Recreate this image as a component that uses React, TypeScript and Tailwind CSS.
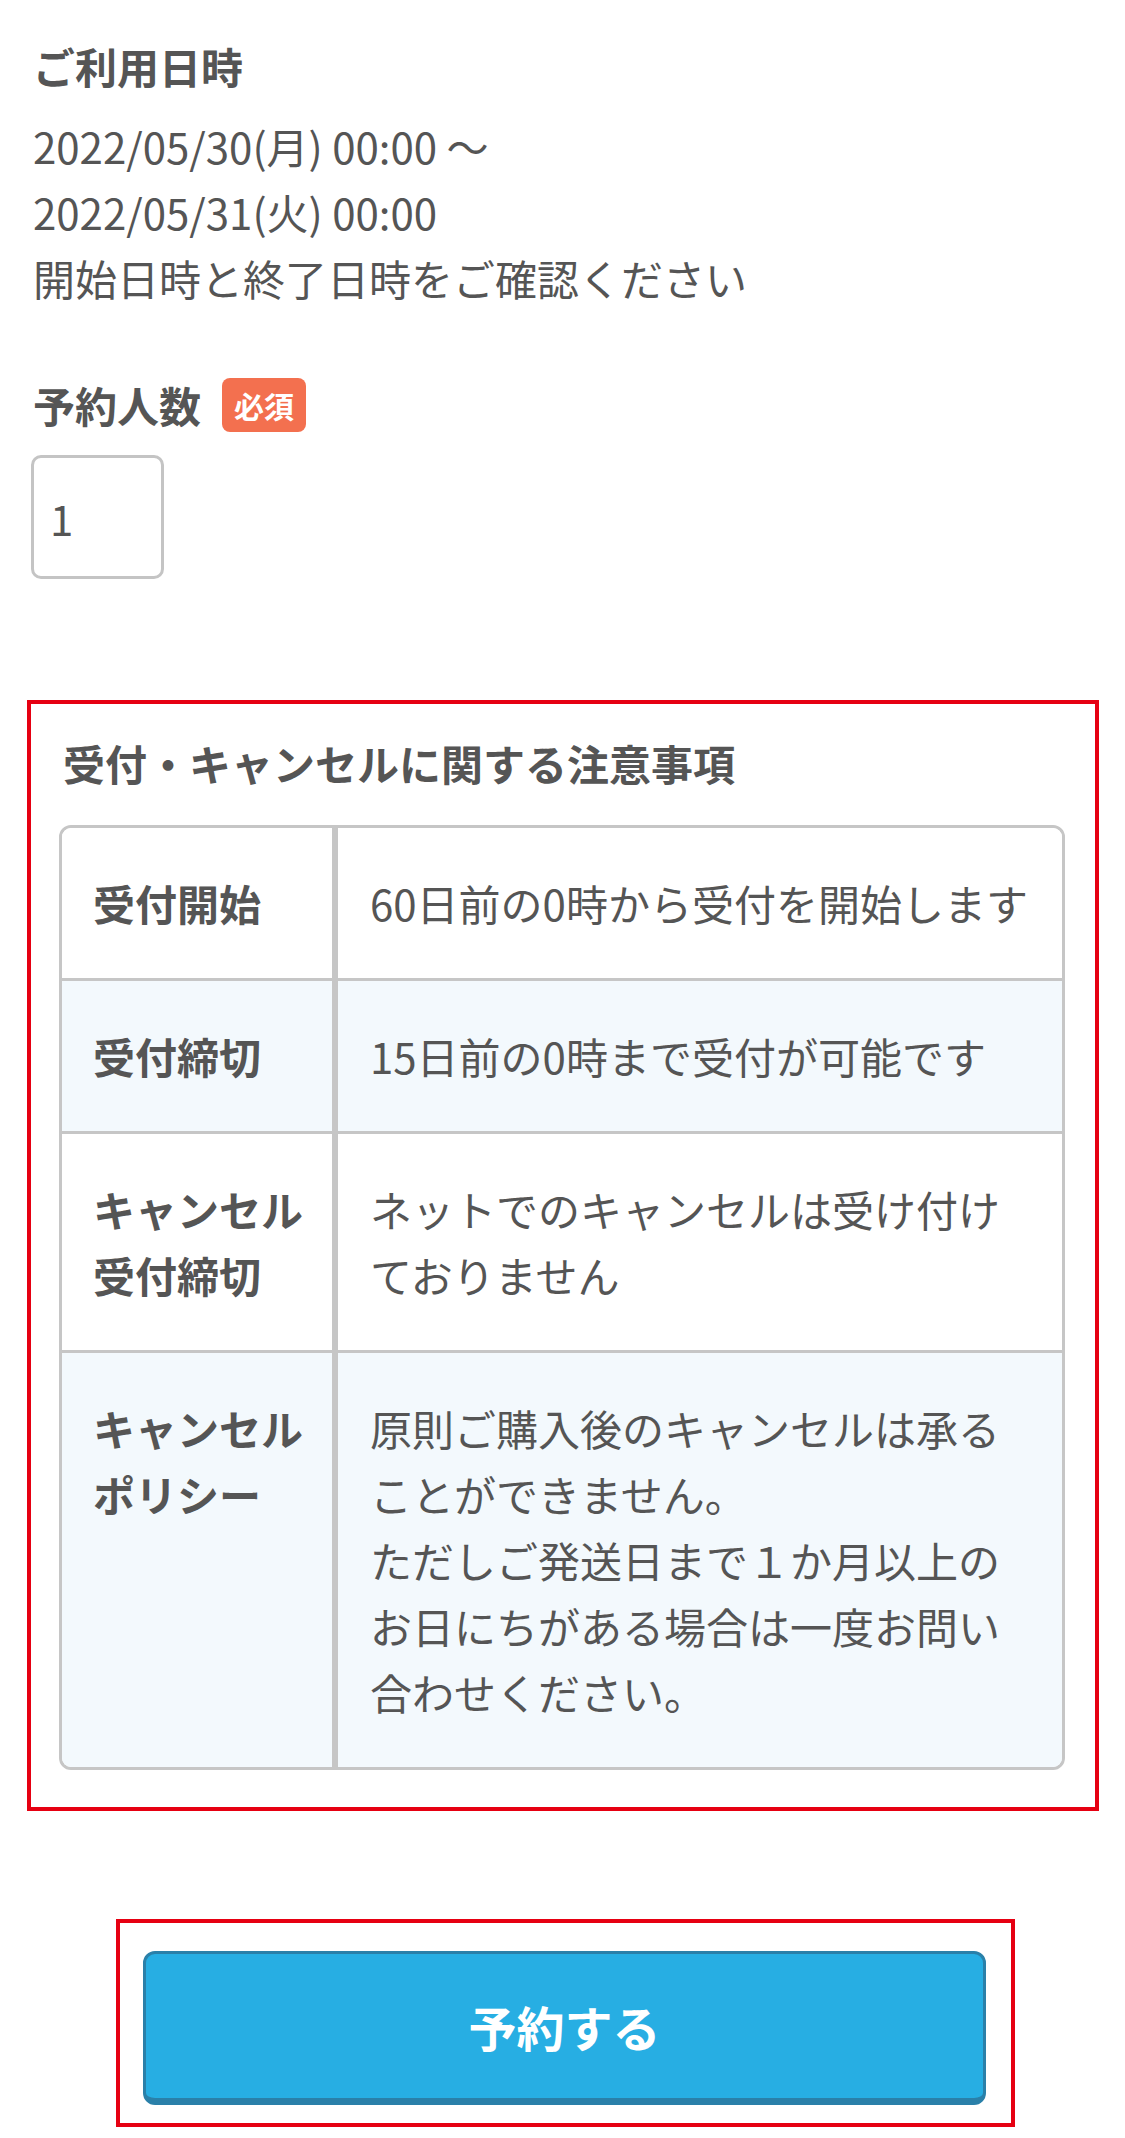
import React from 'react';

type Row = { head: string[]; body: string[]; alt: boolean };

const ROWS: Row[] = [
  { head: ['受付開始'], body: ['60日前の0時から受付を開始します'], alt: false },
  { head: ['受付締切'], body: ['15日前の0時まで受付が可能です'], alt: true },
  { head: ['キャンセル', '受付締切'], body: ['ネットでのキャンセルは受け付け', 'ておりません'], alt: false },
  {
    head: ['キャンセル', 'ポリシー'],
    body: [
      '原則ご購入後のキャンセルは承る',
      'ことができません。',
      'ただしご発送日まで１か月以上の',
      'お日にちがある場合は一度お問い',
      '合わせください。',
    ],
    alt: true,
  },
];

const NoticeTable: React.FC = () => (
  <div className="w-[1006px] border-[3px] border-[#c6c6c6] rounded-[12px] overflow-hidden">
    {ROWS.map((row, idx) => (
      <div
        key={idx}
        className={`flex ${idx > 0 ? 'border-t-[3px] border-[#c6c6c6]' : ''} ${row.alt ? 'bg-[#f3f9fd]' : 'bg-white'}`}
      >
        <div className="w-[276px] shrink-0 border-r-[6px] border-[#c6c6c6] pl-[31px] py-[42px] font-bold">
          {row.head.map(h => (
            <div key={h} className="whitespace-nowrap">{h}</div>
          ))}
        </div>
        <div className="flex-1 pl-[32px] pr-[20px] py-[42px]">
          {row.body.map(b => (
            <div key={b} className="whitespace-nowrap">{b}</div>
          ))}
        </div>
      </div>
    ))}
  </div>
);

export default function App() {
  return (
    <div
      className="w-[1125px] min-h-[2138px] bg-white text-[#555555] text-[42px] leading-[66px] pb-[11px]"
      style={{ fontFamily: '"Noto Sans CJK JP", "Noto Sans", sans-serif' }}
    >
      <div className="px-[33px] pt-[33px]">
        <h2 className="font-bold">ご利用日時</h2>
        <div className="mt-[14px]">
          <div>2022/05/30(月) 00:00 ～</div>
          <div>2022/05/31(火) 00:00</div>
          <div>開始日時と終了日時をご確認ください</div>
        </div>

        <div className="mt-[61px] flex items-center h-[66px]">
          <span className="font-bold">予約人数</span>
          <span className="ml-[21px] w-[84px] h-[54px] flex items-center justify-center rounded-[8px] bg-[#f3704f] text-white font-bold text-[30px] leading-none">
            必須
          </span>
        </div>
        <input
          type="text"
          defaultValue="1"
          readOnly
          className="mt-[17px] -ml-[2px] block w-[133px] h-[124px] border-[3px] border-[#c4c4c4] rounded-[10px] pl-[16px] text-[42px] text-[#555555] outline-none"
        />
      </div>

      <section className="mt-[121px] ml-[27px] w-[1072px] border-[4px] border-[#e60012] pl-[32px] pt-[26px] pb-[37px]">
        <h3 className="font-bold">受付・キャンセルに関する注意事項</h3>
        <div className="mt-[29px] -ml-[4px]">
          <NoticeTable />
        </div>
      </section>

      <div className="mt-[108px] ml-[116px] w-[899px] border-[4px] border-[#e60012] pl-[23px] pt-[28px] pb-[18px]">
        <button
          type="button"
          className="w-[843px] h-[154px] rounded-[12px] bg-[#27aee3] border-[3px] border-b-[7px] border-[#2a80a9] text-white font-bold text-[48px] flex items-center justify-center"
        >
          予約する
        </button>
      </div>
    </div>
  );
}
